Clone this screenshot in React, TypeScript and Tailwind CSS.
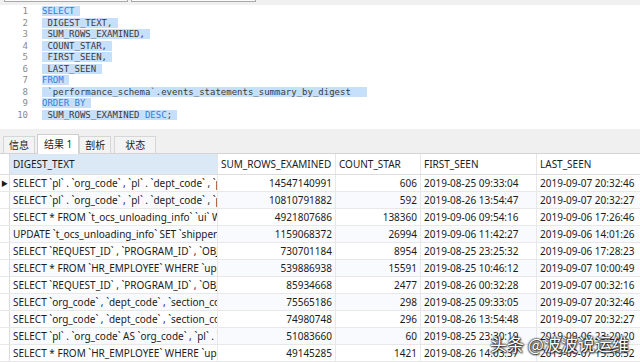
import React from 'react';

const KW = 'text-[#2f7fd8]';

type Seg = { t: string; kw?: boolean };

const sqlLines: Seg[][] = [
  [{ t: 'SELECT', kw: true }],
  [{ t: ' DIGEST_TEXT,' }],
  [{ t: ' SUM_ROWS_EXAMINED,' }],
  [{ t: ' COUNT_STAR,' }],
  [{ t: ' FIRST_SEEN,' }],
  [{ t: ' LAST_SEEN' }],
  [{ t: 'FROM', kw: true }],
  [{ t: ' `performance_schema`.events_statements_summary_by_digest  ' }],
  [{ t: 'ORDER BY', kw: true }],
  [{ t: ' SUM_ROWS_EXAMINED ' }, { t: 'DESC', kw: true }, { t: ';' }],
];

const rows = [
  ['SELECT `pl` . `org_code` , `pl` . `dept_code` , `pl` . `section_code`', '14547140991', '606', '2019-08-25 09:33:04', '2019-09-07 20:32:46'],
  ['SELECT `pl` . `org_code` , `pl` . `dept_code` , `pl` . `section_code`', '10810791882', '592', '2019-08-26 13:54:47', '2019-09-07 20:32:27'],
  ['SELECT * FROM `t_ocs_unloading_info` `ui` WHERE', '4921807686', '138360', '2019-09-06 09:54:16', '2019-09-06 17:26:46'],
  ['UPDATE `t_ocs_unloading_info` SET `shipper` = ?', '1159068372', '26994', '2019-09-06 11:42:27', '2019-09-06 14:01:26'],
  ['SELECT `REQUEST_ID` , `PROGRAM_ID` , `OBJECT_ID`', '730701184', '8954', '2019-08-25 23:25:32', '2019-09-06 17:28:23'],
  ['SELECT * FROM `HR_EMPLOYEE` WHERE `upper`', '539886938', '15591', '2019-08-25 10:46:12', '2019-09-07 10:00:49'],
  ['SELECT `REQUEST_ID` , `PROGRAM_ID` , `OBJECT_ID`', '85934668', '2477', '2019-08-26 00:32:28', '2019-09-07 00:32:16'],
  ['SELECT `org_code` , `dept_code` , `section_code`', '75565186', '298', '2019-08-25 09:33:05', '2019-09-07 20:32:46'],
  ['SELECT `org_code` , `dept_code` , `section_code`', '74980748', '296', '2019-08-26 13:54:48', '2019-09-07 20:32:27'],
  ['SELECT `pl` . `org_code` AS `org_code` , `pl` . `dept_code`', '51083660', '60', '2019-08-25 23:30:19', '2019-09-06 23:20:20'],
  ['SELECT * FROM `HR_EMPLOYEE` WHERE `upper`', '49145285', '1421', '2019-08-26 14:03:37', '2019-09-07 15:56:52'],
];

const cols = [
  { name: 'DIGEST_TEXT', w: 'w-[208px]', right: false },
  { name: 'SUM_ROWS_EXAMINED', w: 'w-[118px]', right: true },
  { name: 'COUNT_STAR', w: 'w-[85px]', right: true },
  { name: 'FIRST_SEEN', w: 'w-[116px]', right: false },
  { name: 'LAST_SEEN', w: 'w-[110px]', right: false },
];

export default function App() {
  return (
    <div className="relative w-[640px] h-[362px] overflow-hidden bg-white font-['Noto_Sans','Noto_Sans_CJK_SC',sans-serif] text-[#1b1b1b]">
      {/* toolbar remnant */}
      <div className="h-[5px] bg-[#f0f0f0] flex gap-[3px] px-[4px]">
        <div className="w-[124px] h-[2px] border-x border-b border-[#a9a9a9] bg-[#fafafa]" />
        <div className="w-[125px] h-[2px] border-x border-b border-[#a9a9a9] bg-[#fafafa]" />
      </div>

      {/* editor */}
      <div className="h-[124px] pt-[1px] font-['DejaVu_Sans_Mono',monospace] text-[9px] leading-[11.5px]">
        {sqlLines.map((line, i) => (
          <div key={i} className="flex">
            <div className="w-[28px] text-right text-[#8a8a8a]">{i + 1}</div>
            <div className="ml-[14px] whitespace-pre">
              <span className="bg-[#c6e0fb] text-[#3a3a3a]">
                {line.map((s, j) => (
                  <span key={j} className={s.kw ? KW : ''}>
                    {s.t}
                  </span>
                ))}
                {' '}
              </span>
            </div>
          </div>
        ))}
      </div>

      {/* tabs */}
      <div className="h-[25px] bg-[#f0f0f0] flex items-end pl-[3px] text-[10px] border-b border-[#d4d4d4]">
        <div className="h-[17px] px-[5px] flex items-center border border-b-0 border-[#d6d6d6] bg-[#f3f3f3] mr-[2px]">信息</div>
        <div className="h-[20px] px-[6px] flex items-center border border-b-0 border-[#cfcfcf] bg-white -mb-px">结果 1</div>
        <div className="h-[17px] px-[5px] flex items-center border border-b-0 border-[#d6d6d6] bg-[#f3f3f3]">剖析</div>
        <div className="h-[17px] px-[10px] ml-[3px] flex items-center border border-b-0 border-[#d6d6d6] bg-[#f3f3f3]">状态</div>
      </div>

      {/* grid */}
      <div className="text-[10px]">
        <div className="flex h-[21px] border-b border-[#dcdcdc]">
          <div className="w-[10px] shrink-0 border-r border-[#dcdcdc]" />
          {cols.map((c, i) => (
            <div
              key={c.name}
              className={`${c.w} shrink-0 flex items-center px-[3px] border-r border-[#e6e6e6] ${i === 0 ? 'bg-[#dbe9f7]' : 'bg-white'}`}
            >
              {c.name}
            </div>
          ))}
        </div>
        {rows.map((r, ri) => (
          <div key={ri} className={`flex h-[17px] border-b border-[#e8e8e8] ${ri % 2 === 1 ? 'bg-[#f8fafd]' : 'bg-white'}`}>
            <div className="w-[10px] shrink-0 border-r border-[#dcdcdc] bg-white flex items-center justify-center text-[7px] leading-none">
              {ri === 0 ? '▶' : ''}
            </div>
            {r.map((v, ci) => (
              <div
                key={ci}
                className={`${cols[ci].w} shrink-0 flex items-center overflow-hidden whitespace-nowrap px-[3px] border-r border-[#e8e8e8] ${cols[ci].right ? 'justify-end' : ''}`}
              >
                {v}
              </div>
            ))}
          </div>
        ))}
      </div>

      {/* watermark */}
      <div className="absolute left-[490px] top-[333px] whitespace-nowrap text-[17px] leading-[22px] text-white font-['Noto_Sans_CJK_SC',sans-serif] [text-shadow:0_0_2px_#000,0_0_2px_#000,1px_1px_2px_#333]">
        头条 @波波说运维
      </div>
    </div>
  );
}
